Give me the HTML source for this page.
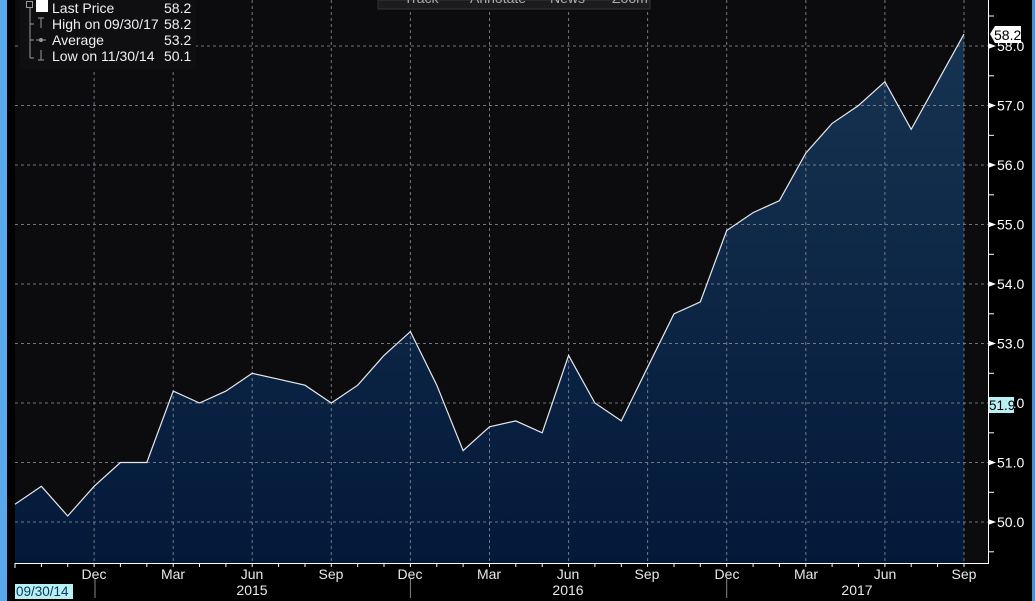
<!DOCTYPE html>
<html><head><meta charset="utf-8"><style>
html,body{margin:0;padding:0;background:#000;}
svg{display:block;font-family:"Liberation Sans",sans-serif;}
</style></head><body>
<svg width="1035" height="601" xmlns="http://www.w3.org/2000/svg">
<defs>
<linearGradient id="g" x1="0" y1="0" x2="0" y2="1" gradientUnits="userSpaceOnUse" gradientTransform="translate(0,30) scale(1,533)">
<stop offset="0" stop-color="#173352"/><stop offset="1" stop-color="#03193a"/>
</linearGradient>
</defs>
<rect width="1035" height="601" fill="#000"/>
<rect x="0" y="0" width="7" height="601" fill="#5aa8ec"/>
<rect x="1032" y="0" width="3" height="601" fill="#4a90d0"/>
<rect x="15" y="0" width="973" height="563" fill="#0c0c0f"/>
<polygon fill="url(#g)" points="15,563 15,504.2 41.4,486.3 67.7,516 94.1,486.3 120.4,462.5 146.8,462.5 173.2,391.1 199.5,403 225.9,391.1 252.2,373.3 278.6,379.2 305,385.2 331.3,403 357.7,385.2 384,355.4 410.4,331.6 436.8,385.2 463.1,450.6 489.5,426.8 515.8,420.9 542.2,432.8 568.6,355.4 594.9,403 621.3,420.9 647.6,367.3 674,313.8 700.3,301.9 726.7,230.5 753.1,212.6 779.4,200.7 805.8,153.1 832.1,123.4 858.5,105.5 884.9,81.7 911.2,129.3 937.6,81.7 964,34.1 964,563"/>
<g stroke="#8a8f99" stroke-width="1" stroke-dasharray="3,3" opacity="0.8">
<line x1="15" x2="988" y1="46" y2="46"/><line x1="15" x2="988" y1="105.5" y2="105.5"/><line x1="15" x2="988" y1="165" y2="165"/><line x1="15" x2="988" y1="224.5" y2="224.5"/><line x1="15" x2="988" y1="284" y2="284"/><line x1="15" x2="988" y1="343.5" y2="343.5"/><line x1="15" x2="988" y1="403" y2="403"/><line x1="15" x2="988" y1="462.5" y2="462.5"/><line x1="15" x2="988" y1="522" y2="522"/>
<line x1="94.1" x2="94.1" y1="0" y2="563"/><line x1="173.2" x2="173.2" y1="0" y2="563"/><line x1="252.2" x2="252.2" y1="0" y2="563"/><line x1="331.3" x2="331.3" y1="0" y2="563"/><line x1="410.4" x2="410.4" y1="0" y2="563"/><line x1="489.5" x2="489.5" y1="0" y2="563"/><line x1="568.6" x2="568.6" y1="0" y2="563"/><line x1="647.6" x2="647.6" y1="0" y2="563"/><line x1="726.7" x2="726.7" y1="0" y2="563"/><line x1="805.8" x2="805.8" y1="0" y2="563"/><line x1="884.9" x2="884.9" y1="0" y2="563"/><line x1="964" x2="964" y1="0" y2="563"/>
</g>
<polyline fill="none" stroke="#e8e8ea" stroke-width="1.2" points="15,504.2 41.4,486.3 67.7,516 94.1,486.3 120.4,462.5 146.8,462.5 173.2,391.1 199.5,403 225.9,391.1 252.2,373.3 278.6,379.2 305,385.2 331.3,403 357.7,385.2 384,355.4 410.4,331.6 436.8,385.2 463.1,450.6 489.5,426.8 515.8,420.9 542.2,432.8 568.6,355.4 594.9,403 621.3,420.9 647.6,367.3 674,313.8 700.3,301.9 726.7,230.5 753.1,212.6 779.4,200.7 805.8,153.1 832.1,123.4 858.5,105.5 884.9,81.7 911.2,129.3 937.6,81.7 964,34.1"/>
<line x1="988.5" y1="0" x2="988.5" y2="564" stroke="#fff"/>
<line x1="15" y1="563.5" x2="989" y2="563.5" stroke="#fff"/>
<g stroke="#fff">
<line x1="988" x2="994" y1="16" y2="16"/><line x1="988" x2="994" y1="75.8" y2="75.8"/><line x1="988" x2="994" y1="135.3" y2="135.3"/><line x1="988" x2="994" y1="194.8" y2="194.8"/><line x1="988" x2="994" y1="254.3" y2="254.3"/><line x1="988" x2="994" y1="313.8" y2="313.8"/><line x1="988" x2="994" y1="373.3" y2="373.3"/><line x1="988" x2="994" y1="432.8" y2="432.8"/><line x1="988" x2="994" y1="492.3" y2="492.3"/><line x1="988" x2="994" y1="551.8" y2="551.8"/>
</g>
<g fill="#fff">
<polygon points="988,43 996,46 988,49"/><polygon points="988,102.5 996,105.5 988,108.5"/><polygon points="988,162 996,165 988,168"/><polygon points="988,221.5 996,224.5 988,227.5"/><polygon points="988,281 996,284 988,287"/><polygon points="988,340.5 996,343.5 988,346.5"/><polygon points="988,459.5 996,462.5 988,465.5"/><polygon points="988,519 996,522 988,525"/>
</g>
<g fill="#fff" font-size="14">
<text x="997" y="51">58.0</text><text x="997" y="110.5">57.0</text><text x="997" y="170">56.0</text><text x="997" y="229.5">55.0</text><text x="997" y="289">54.0</text><text x="997" y="348.5">53.0</text><text x="997" y="408">52.0</text><text x="997" y="467.5">51.0</text><text x="997" y="527">50.0</text>
</g>
<polygon points="990,34 995,26 1021,26 1021,43 995,43" fill="#fff"/>
<text x="994" y="40" font-size="14" fill="#000">58.2</text>
<rect x="989" y="397" width="25" height="16" fill="#b8f0f4"/>
<text x="989" y="410" font-size="13.5" fill="#000">51.9</text>
<g stroke="#fff">
<line x1="15" x2="15" y1="563" y2="568"/>
<line x1="41.4" x2="41.4" y1="563" y2="567"/><line x1="67.7" x2="67.7" y1="563" y2="567"/><line x1="94.1" x2="94.1" y1="563" y2="567"/><line x1="120.4" x2="120.4" y1="563" y2="567"/><line x1="146.8" x2="146.8" y1="563" y2="567"/><line x1="173.2" x2="173.2" y1="563" y2="567"/><line x1="199.5" x2="199.5" y1="563" y2="567"/><line x1="225.9" x2="225.9" y1="563" y2="567"/><line x1="252.2" x2="252.2" y1="563" y2="567"/><line x1="278.6" x2="278.6" y1="563" y2="567"/><line x1="305" x2="305" y1="563" y2="567"/><line x1="331.3" x2="331.3" y1="563" y2="567"/><line x1="357.7" x2="357.7" y1="563" y2="567"/><line x1="384" x2="384" y1="563" y2="567"/><line x1="410.4" x2="410.4" y1="563" y2="567"/><line x1="436.8" x2="436.8" y1="563" y2="567"/><line x1="463.1" x2="463.1" y1="563" y2="567"/><line x1="489.5" x2="489.5" y1="563" y2="567"/><line x1="515.8" x2="515.8" y1="563" y2="567"/><line x1="542.2" x2="542.2" y1="563" y2="567"/><line x1="568.6" x2="568.6" y1="563" y2="567"/><line x1="594.9" x2="594.9" y1="563" y2="567"/><line x1="621.3" x2="621.3" y1="563" y2="567"/><line x1="647.6" x2="647.6" y1="563" y2="567"/><line x1="674" x2="674" y1="563" y2="567"/><line x1="700.3" x2="700.3" y1="563" y2="567"/><line x1="726.7" x2="726.7" y1="563" y2="567"/><line x1="753.1" x2="753.1" y1="563" y2="567"/><line x1="779.4" x2="779.4" y1="563" y2="567"/><line x1="805.8" x2="805.8" y1="563" y2="567"/><line x1="832.1" x2="832.1" y1="563" y2="567"/><line x1="858.5" x2="858.5" y1="563" y2="567"/><line x1="884.9" x2="884.9" y1="563" y2="567"/><line x1="911.2" x2="911.2" y1="563" y2="567"/><line x1="937.6" x2="937.6" y1="563" y2="567"/><line x1="964" x2="964" y1="563" y2="567"/>
</g>
<g stroke="#888"><line x1="95" x2="95" y1="579" y2="598"/><line x1="410.4" x2="410.4" y1="579" y2="598"/><line x1="726.7" x2="726.7" y1="579" y2="598"/></g>
<g fill="#e8e8e8" font-size="14" text-anchor="middle">
<text x="94" y="579">Dec</text><text x="173" y="579">Mar</text><text x="252" y="579">Jun</text><text x="331" y="579">Sep</text><text x="410" y="579">Dec</text><text x="489" y="579">Mar</text><text x="568" y="579">Jun</text><text x="647" y="579">Sep</text><text x="727" y="579">Dec</text><text x="806" y="579">Mar</text><text x="885" y="579">Jun</text><text x="964" y="579">Sep</text>
<text x="252" y="595">2015</text><text x="568" y="595">2016</text><text x="857" y="595">2017</text>
</g>
<rect x="15" y="584" width="58" height="15" fill="#b8f0f4"/>
<text x="16" y="596" font-size="13.5" fill="#0a3a60">09/30/14</text>
<rect x="378" y="0" width="272" height="9" fill="#1c1c1e" stroke="#333"/>
<g fill="#aaa" font-size="14"><text x="404" y="3">Track</text><text x="470" y="3">Annotate</text><text x="550" y="3">News</text><text x="612" y="3">Zoom</text></g>
<rect x="20" y="0" width="176" height="69" rx="2" fill="#0f0f12"/>
<g stroke="#999" fill="none">
<rect x="26.5" y="1.5" width="6" height="6"/>
<line x1="30" y1="8" x2="30" y2="58"/>
<line x1="30" y1="24" x2="34" y2="24"/><line x1="30" y1="40" x2="34" y2="40"/><line x1="30" y1="58" x2="34" y2="58"/>
<line x1="41" y1="18" x2="41" y2="28"/><line x1="38" y1="18" x2="44" y2="18"/>
<line x1="36" y1="40" x2="46" y2="40"/><circle cx="41" cy="40" r="1.5" fill="#999"/>
<line x1="41" y1="50" x2="41" y2="60"/><line x1="38" y1="60" x2="44" y2="60"/>
</g>
<rect x="36" y="0" width="12" height="12" fill="#fff"/>
<g fill="#f0f0f0" font-size="14">
<text x="52" y="13">Last Price</text><text x="52" y="29">High on 09/30/17</text><text x="52" y="45">Average</text><text x="52" y="61">Low on 11/30/14</text>
<text x="164" y="13">58.2</text><text x="164" y="29">58.2</text><text x="164" y="45">53.2</text><text x="164" y="61">50.1</text>
</g>
</svg>
</body></html>
